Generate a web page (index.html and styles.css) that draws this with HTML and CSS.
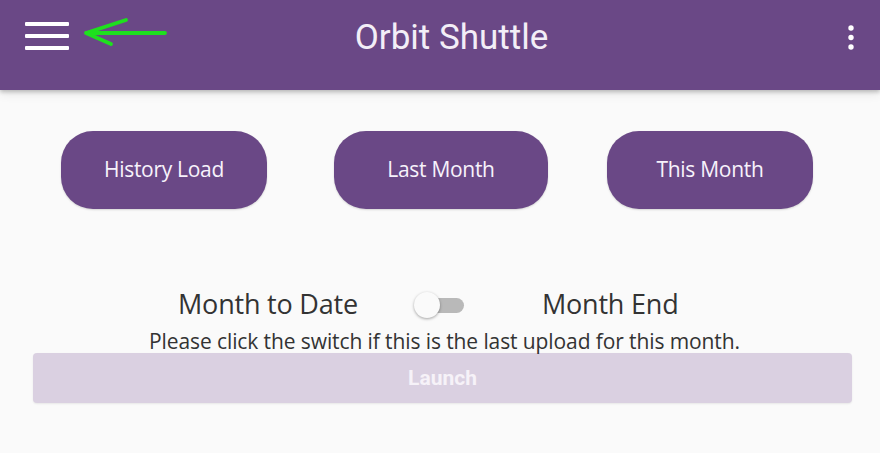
FILE: index.html
```html
<!DOCTYPE html>
<html lang="en">
<head>
<meta charset="utf-8">
<title>Orbit Shuttle</title>
<link rel="stylesheet" href="styles.css">
</head>
<body>
  <header class="toolbar">
    <div class="toolbar-left">
      <svg class="menu-icon" width="44" height="28" viewBox="0 0 44 28">
        <rect x="0" y="0" width="44" height="4" rx="1" fill="#fff"/>
        <rect x="0" y="12" width="44" height="4" rx="1" fill="#fff"/>
        <rect x="0" y="24" width="44" height="4" rx="1" fill="#fff"/>
      </svg>
      <svg class="pointer" width="86" height="30" viewBox="0 0 86 30">
        <path d="M82 16 H3 M3 16 L43 3 M3 16 L28 27" stroke="#1ee01e" stroke-width="3.8" stroke-linecap="round" stroke-linejoin="round" fill="none"/>
      </svg>
    </div>
    <h1 class="title">Orbit Shuttle</h1>
    <div class="toolbar-right">
      <svg class="more-icon" width="8" height="26" viewBox="0 0 8 26">
        <circle cx="4" cy="4" r="2.7" fill="#fff"/>
        <circle cx="4" cy="13.5" r="2.7" fill="#fff"/>
        <circle cx="4" cy="23" r="2.7" fill="#fff"/>
      </svg>
    </div>
  </header>

  <main class="content">
    <div class="period-buttons">
      <button class="period-btn btn-history">History Load</button>
      <button class="period-btn btn-last">Last Month</button>
      <button class="period-btn btn-this">This Month</button>
    </div>

    <div class="switch-row">
      <span class="switch-label">Month to Date</span>
      <span class="switch">
        <span class="switch-track"></span>
        <span class="switch-thumb"></span>
      </span>
      <span class="switch-label">Month End</span>
    </div>
    <p class="hint">Please click the switch if this is the last upload for this month.</p>

    <button class="launch-btn" disabled>Launch</button>
  </main>
</body>
</html>
```

FILE: styles.css
```css
* {
  box-sizing: border-box;
}

html, body {
  margin: 0;
  padding: 0;
}

body {
  width: 880px;
  height: 453px;
  overflow: hidden;
  background: #fafafa;
  font-family: "Open Sans", "Noto Sans", sans-serif;
}

/* top bar */
.toolbar {
  height: 90px;
  background: #6a4886;
  display: grid;
  grid-template-columns: 1fr auto 1fr;
  align-items: start;
  padding: 0 24px 0 25px;
  box-shadow: 0 2px 4px rgba(0, 0, 0, 0.22), 0 4px 10px rgba(0, 0, 0, 0.08);
  position: relative;
  z-index: 1;
}

.toolbar-left {
  display: flex;
  align-items: flex-start;
  gap: 14px;
}

.menu-icon {
  display: block;
  margin-top: 22px;
}

.pointer {
  display: block;
  margin-top: 17px;
}

.title {
  margin: 18px 0 0 22px;
  text-align: center;
  font-family: Roboto, "Liberation Sans", sans-serif;
  font-weight: 400;
  font-size: 35px;
  line-height: 40px;
  color: #f3eef7;
}

.toolbar-right {
  display: flex;
  justify-content: flex-end;
  padding-top: 24px;
  padding-right: 1px;
}

.more-icon {
  display: block;
}

/* main */
.content {
  padding: 41px 28px 0 33px;
}

.period-buttons {
  display: flex;
  justify-content: flex-start;
  padding-left: 28px;
}

.period-btn {
  height: 78px;
  border: none;
  border-radius: 32px;
  background: #6a4886;
  color: #f7f2fb;
  font-family: "Open Sans", "Noto Sans", sans-serif;
  font-size: 21px;
  font-weight: 500;
  letter-spacing: -0.3px;
  padding: 0 0 2px;
  box-shadow: 0 1px 2px rgba(0, 0, 0, 0.15);
}

.btn-history {
  width: 206px;
}

.btn-last {
  width: 214px;
  margin-left: 67px;
}

.btn-this {
  width: 206px;
  margin-left: 59px;
}

.switch-row {
  display: flex;
  align-items: center;
  margin-top: 79px;
  padding-left: 145px;
  height: 32px;
}

.switch-label {
  font-size: 27px;
  line-height: 32px;
  color: #333;
  letter-spacing: -0.2px;
}

.switch {
  position: relative;
  width: 50px;
  height: 28px;
  margin-left: 56px;
  margin-right: 78px;
  margin-top: 2px;
}

.switch-track {
  position: absolute;
  left: 8px;
  right: 0;
  top: 7px;
  height: 15px;
  border-radius: 8px;
  background: #b9b9b9;
}

.switch-thumb {
  position: absolute;
  left: 0;
  top: 1px;
  width: 26px;
  height: 26px;
  border-radius: 50%;
  background: #fafafa;
  box-shadow: 0 1px 3px rgba(0, 0, 0, 0.35);
}

.hint {
  margin: 9px 0 0 0;
  text-align: center;
  font-size: 21px;
  color: #333;
  line-height: 24px;
  letter-spacing: -0.1px;
  padding-left: 4px;
}

.launch-btn {
  display: block;
  width: 819px;
  height: 50px;
  margin-top: 0;
  border: none;
  border-radius: 4px;
  background: #dad0e1;
  color: #f6f2f8;
  font-family: Roboto, "Liberation Sans", sans-serif;
  font-weight: 700;
  font-size: 21px;
  box-shadow: 0 1px 2px rgba(0, 0, 0, 0.08);
}
```
